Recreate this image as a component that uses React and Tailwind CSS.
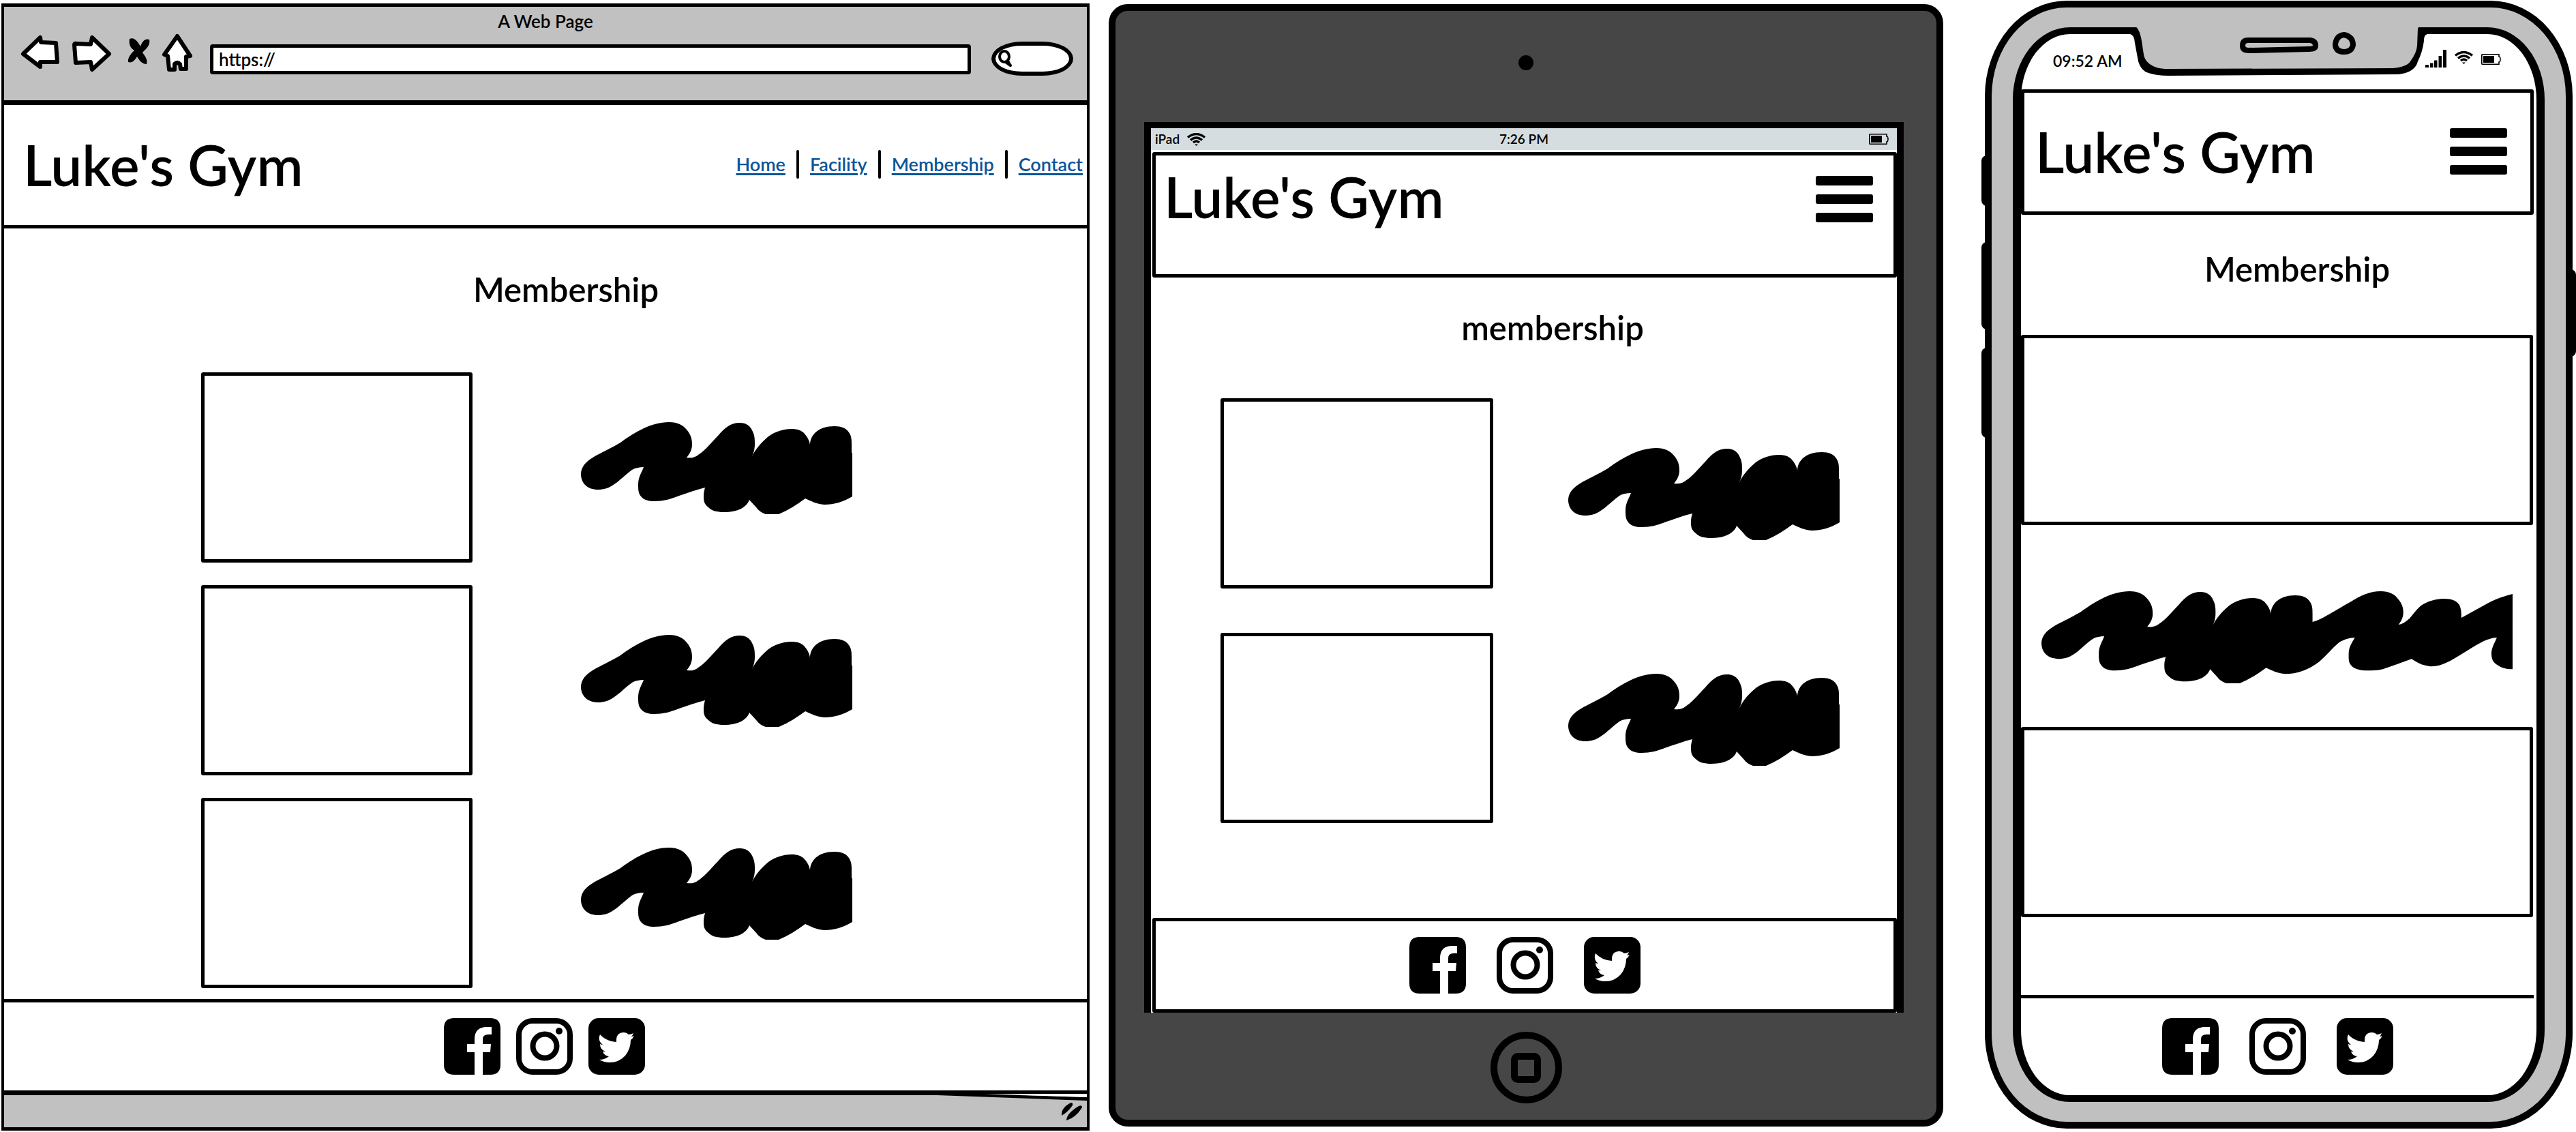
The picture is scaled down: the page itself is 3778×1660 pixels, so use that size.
import React from "react";

function Logo() {
  return <p className="text-[82px] leading-[96px] font-semibold whitespace-nowrap">Luke's Gym</p>;
}

function Title({ children, className }) {
  return <h1 className={`text-center text-[49px] leading-[64px] font-semibold ${className}`}>{children}</h1>;
}

function Placeholder() {
  return <div className="h-[279px] rounded-[3px] border-[5px] border-black bg-white" />;
}

const SCRIBBLE =
  "M0 76C1 54 28 48 58 30C80 14 104 0 129 0C142 0 149 4 155 11C161 18 163 24 163 33C163 40 160 46 155 52C162 53 167 52 172 48C183 41 192 29 201 20C211 8 220 1 233 1C242 1 247 5 250 10C255 19 255 24 255 32C255 38 254 44 251 50C256 40 264 30 275 21C285 14 296 10 309 10C317 10 323 12 327 16C332 21 335 27 336 33C336 26 339 20 344 15C351 9 360 6 372 6C382 6 389 9 393 15C397 21 397 26 397 33L397 45C410 42 430 28 452 16C468 6 481 0 497 0C509 0 517 4 522 11C528 18 530 24 530 31C530 38 527 44 523 49C530 48 534 44 539 40C545 33 549 27 556 21C567 14 578 11 590 11C601 11 608 14 612 20C615 26 615 33 615 39L653 18C666 11 678 7 690 4V114C680 114 674 112 668 108C661 104 659 99 659 90C660 81 664 75 667 68C661 68 655 70 648 73C632 81 618 91 602 100C591 106 582 110 570 110C558 109 550 104 542 99C526 105 512 110 500 114C492 116 485 116 477 116C467 116 460 114 455 110C449 105 450 98 450 91C450 82 455 75 459 68C451 68 443 71 436 75C426 83 418 94 407 103C391 115 375 121 357 121C345 120 338 116 329 112C317 121 304 129 290 135H271C264 132 261 130 258 126L247 114C243 125 230 132 210 132C199 132 192 130 187 125C180 120 180 114 180 108C180 103 181 100 182 96C169 99 157 104 144 108C132 113 120 116 108 116C99 116 93 114 89 110C84 105 84 99 84 91C84 81 89 74 92 66C86 66 80 67 75 70C65 77 58 85 49 91C41 97 33 99 25 99C10 99 0 90 0 76Z";

function Scribble({ wide }) {
  return (
    <svg viewBox={wide ? "0 0 690 135" : "0 0 398 135"} className="block w-full" aria-hidden="true">
      <path d={SCRIBBLE} />
    </svg>
  );
}

function Facebook() {
  return (
    <svg viewBox="0 0 83 83" className="size-[83px]" aria-hidden="true">
      <path
        fillRule="evenodd"
        d="M15 0H68Q83 0 83 15V68Q83 83 68 83H15Q0 83 0 68V15Q0 0 15 0ZM45 84V50H34V38H45V31Q45 13 63 13H70V24H65Q57 24 57 31V38H69L68 50H57V84Z"
      />
    </svg>
  );
}

function Instagram() {
  return (
    <svg viewBox="0 0 83 83" className="size-[83px]" aria-hidden="true">
      <rect x="4" y="4" width="75" height="75" rx="20" fill="none" stroke="#000" strokeWidth="8" />
      <circle cx="42" cy="41" r="17.5" fill="none" stroke="#000" strokeWidth="8" />
      <circle cx="63" cy="19" r="5" />
    </svg>
  );
}

function Twitter() {
  return (
    <svg viewBox="0 0 83 83" className="size-[83px]" aria-hidden="true">
      <rect width="83" height="83" rx="15" />
      <path
        fill="#fff"
        d="M17 24Q26 34 41 35Q40 21 52 21Q56 21 59 24Q63 24 66 22Q65 25 63 27Q65 27 67 26Q65 30 62 32Q62 45 54 55Q45 65 31 65Q23 65 16 61Q24 61 30 56Q23 55 21 49H25Q17 46 17 38Q19 39 21 39Q13 33 17 24Z"
      />
    </svg>
  );
}

function Socials({ className }) {
  return (
    <div className={`flex justify-center ${className}`}>
      <a href="#facebook" aria-label="Facebook"><Facebook /></a>
      <a href="#instagram" aria-label="Instagram"><Instagram /></a>
      <a href="#twitter" aria-label="Twitter"><Twitter /></a>
    </div>
  );
}

function MenuButton() {
  return (
    <button type="button" aria-label="Menu" className="flex w-[84px] flex-col gap-[13px]">
      <span className="h-[14px] w-full rounded-[3px] bg-black" />
      <span className="h-[14px] w-full rounded-[3px] bg-black" />
      <span className="h-[14px] w-full rounded-[3px] bg-black" />
    </button>
  );
}

function Wifi() {
  return (
    <svg viewBox="0 0 27 19" className="h-[19px] w-[27px]" fill="none" stroke="#000" strokeWidth="3.4" aria-hidden="true">
      <path d="M1 6.500Q13.500 -3.500 26 6.500" />
      <path d="M5 10.500Q13.500 3.500 22 10.500" />
      <path d="M9 14Q13.500 10 18 14" />
      <path d="M11 16.500H16L13.500 19Z" fill="#000" stroke="none" />
    </svg>
  );
}

function Battery() {
  return (
    <svg viewBox="0 0 29 16" className="h-4 w-[29px]" aria-hidden="true">
      <path d="M1.500 .8H26V4Q28 4 28 8Q28 12 26 12V15.200H1.500Q.8 15.200 .8 14V2Q.8 .8 1.500 .8Z" fill="none" stroke="#000" strokeWidth="1.600" />
      <rect x="3" y="3" width="16" height="10" />
    </svg>
  );
}

function Signal() {
  return (
    <svg viewBox="0 0 31 26" className="h-[26px] w-[31px]" aria-hidden="true">
      <path d="M0 22H5V26H0ZM7 19.500H11.500V26H7ZM13 15.500H17.500V26H13ZM19.500 9H24V26H19.500ZM26 0H31V26H26Z" />
    </svg>
  );
}

function ToolIcon({ box, className, label, d, solid }) {
  return (
    <button type="button" aria-label={label} className={className}>
      <svg viewBox={box} className="block h-[60px] w-full overflow-visible" aria-hidden="true">
        <path d={d} fill={solid ? "#000" : "#fff"} stroke={solid ? "none" : "#000"} strokeWidth="6" strokeLinejoin="round" />
      </svg>
    </button>
  );
}

const LINKS = ["Home", "Facility", "Membership", "Contact"];

function Browser() {
  return (
    <section className="mt-[5px] flex flex-col border-x-4 border-t-[5px] border-b-[5px] border-black bg-white">
      <div className="border-b-[7px] border-black bg-[#c1c1c1] pt-[5px] pb-9">
        <p className="text-center text-[26px] leading-8 font-semibold">A Web Page</p>
        <div className="mt-[3px] flex items-start gap-4 pr-5 pl-6">
          <ToolIcon label="Back" className="w-[58px]" box="30 50 58 60" d="M34 79L59 55L60 62L82 63L84 91L59 91V98Z" />
          <ToolIcon label="Forward" className="w-[62px]" box="104 50 62 60" d="M109 66Q109 63 112 64L133 65L135 55L160 79L135 102L133 91L111 92Z" />
          <ToolIcon solid label="Stop" className="w-10" box="182 50 40 60" d="M190 57C197 54 202 61 206 68C209 60 213 56 219 58C221 66 214 72 209 77C213 83 217 87 215 94C208 94 204 88 201 83C198 88 194 93 188 91C187 84 193 78 197 74C190 70 189 63 190 57Z" />
          <ToolIcon label="Home" className="w-[46px]" box="238 50 46 60" d="M260 53L279 82L273 83V101H265L264 94Q260 90 256 94V102H248L246 82L241 80Z" />
          <input
            aria-label="Address"
            defaultValue="https://"
            className="mt-[15px] ml-2 h-11 min-w-0 flex-1 rounded-[4px] border-[5px] border-black bg-white px-2 text-[26px] font-semibold outline-none"
          />
          <label className="mt-[11px] ml-[14px] flex h-[50px] w-[120px] items-center rounded-[50px/28px] border-[6px] border-black bg-white pl-1">
            <svg viewBox="0 0 20 26" className="h-[26px] w-5 shrink-0" fill="none" stroke="#000" strokeWidth="4" strokeLinecap="round" aria-hidden="true">
              <ellipse cx="9" cy="10" rx="7" ry="8" />
              <path d="M11 18L18 23M14 16L17 22" />
            </svg>
            <input type="search" aria-label="Search" className="min-w-0 flex-1 bg-transparent outline-none" />
          </label>
        </div>
      </div>
      <header className="flex h-[181px] items-center justify-between border-b-[5px] border-black pr-1.5 pb-0.5 pl-7">
        <Logo />
        <nav className="flex items-center gap-4 text-[27px] font-semibold text-[#0b5599]">
          {LINKS.map((name, i) => (
            <React.Fragment key={name}>
              {i > 0 && <span className="h-[42px] w-1 rounded-full bg-black" />}
              <a href={`#${name.toLowerCase()}`} className="underline decoration-[3px] underline-offset-[3px]">{name}</a>
            </React.Fragment>
          ))}
        </nav>
      </header>
      <main className="flex-1 pt-[57px] pb-4">
        <Title className="pl-[60px]">Membership</Title>
        <div className="mt-[90px] grid grid-cols-[289fr_398fr_159fr_398fr_344fr] items-center gap-y-[33px]">
          {[0, 1, 2].map((i) => (
            <React.Fragment key={i}>
              <div className="col-start-2"><Placeholder /></div>
              <div className="col-start-4 pt-0.5"><Scribble /></div>
            </React.Fragment>
          ))}
        </div>
      </main>
      <footer className="border-y-[5px] border-black py-[23px] pr-1">
        <Socials className="gap-[23px]" />
      </footer>
      <div className="relative flex h-[49px] items-center justify-end border-t-2 border-black bg-[#c1c1c1] pr-1.5">
        <svg viewBox="0 0 220 12" className="absolute -top-0.5 right-0 h-3 w-[220px]" aria-hidden="true">
          <path d="M0 0H60L220 5V10L0 2Z" />
          <path d="M70 0H220V5Z" fill="#fff" />
        </svg>
        <svg viewBox="0 0 32 28" className="h-7 w-8" aria-hidden="true">
          <path d="M1 20Q0 8 15 1Q18 1 17 5Q10 15 1 20ZM8 27Q8 17 26 6Q31 4 31 8Q22 23 8 27Z" />
        </svg>
      </div>
    </section>
  );
}

function Tablet() {
  return (
    <section className="my-1.5 flex flex-col items-center rounded-[28px] border-[10px] border-black bg-[#464646] pt-[65px] pb-6">
      <span className="size-[22px] rounded-full bg-black" />
      <div className="mt-[76px] flex w-full flex-1 pr-12 pl-[42px]">
        <div className="flex flex-1 flex-col border-x-[10px] border-t-[9px] border-black bg-white">
          <div className="grid h-8 grid-cols-3 items-center bg-[#d6dde0] px-1.5 text-[19px] leading-8 font-semibold">
            <span className="flex items-center gap-[11px]">iPad <Wifi /></span>
            <span className="text-center">7:26 PM</span>
            <span className="flex justify-end pr-1.5"><Battery /></span>
          </div>
          <header className="mt-[3px] ml-0.5 flex h-[184px] items-start justify-between rounded-[3px] border-[5px] border-black pr-[30px] pl-3">
            <div className="pt-3"><Logo /></div>
            <div className="pt-[30px]"><MenuButton /></div>
          </header>
          <main className="pt-[41px]">
            <Title className="pl-[84px]">membership</Title>
            <div className="mt-[72px] grid grid-cols-[102fr_400fr_110fr_398fr_84fr] items-center gap-y-[65px]">
              <div className="col-start-2"><Placeholder /></div>
              <div className="col-start-4 pt-0.5"><Scribble /></div>
              <div className="col-start-2"><Placeholder /></div>
              <div className="col-start-4 pb-6"><Scribble /></div>
            </div>
          </main>
          <footer className="mt-auto ml-0.5 rounded-[3px] border-[5px] border-black py-[23px]">
            <Socials className="gap-[45px]" />
          </footer>
        </div>
      </div>
      <button type="button" aria-label="Home button" className="mt-7 grid size-[105px] place-items-center rounded-full border-[10px] border-black">
        <span className="size-11 rounded-[10px] border-[10px] border-black" />
      </button>
    </section>
  );
}

function Notch() {
  return (
    <svg viewBox="0 0 448 76" className="absolute -top-3 left-1/2 h-[76px] w-[448px] -translate-x-1/2" aria-hidden="true">
      <path d="M6 12Q12 13 13 25L18 52Q22 66 33 69Q45 73 62 73L400 71Q424 68 428 52Q435 38 437 22Q437 12 443 12V2H4V12Z" />
      <path d="M13 0Q20 4 23 22L26 42Q28 55 45 61Q52 63 62 63L391 62Q412 60 417 52Q426 40 427 29L428 4L430 0Z" fill="#c0c0c0" />
      <path d="M179 21H270Q278 22 278 29Q278 34 268 34L180 36Q171 36 171 29Q171 21 179 21Z" fill="none" stroke="#000" strokeWidth="8" strokeLinejoin="round" />
      <path d="M320 13Q333 16 333 28Q331 38 320 38Q308 38 307 28Q308 14 320 13Z" fill="none" stroke="#000" strokeWidth="8" />
    </svg>
  );
}

function Phone() {
  return (
    <section className="mt-px mb-[3px] flex pr-[5px] pl-[33px]">
      <div className="relative flex flex-1 rounded-[120px/140px] border-[10px] border-black bg-[#c0c0c0] px-[31px] py-[29px]">
        <span className="absolute top-[217px] -left-[15px] h-[74px] w-2 rounded-l-lg bg-black" />
        <span className="absolute top-[344px] -left-[15px] h-[128px] w-2 rounded-l-lg bg-black" />
        <span className="absolute top-[499px] -left-[15px] h-[132px] w-2 rounded-l-lg bg-black" />
        <span className="absolute top-[384px] -right-[15px] h-[128px] w-2 rounded-r-lg bg-black" />
        <div className="relative flex flex-1 flex-col rounded-[84px/106px] border-x-[12px] border-y-[10px] border-black bg-white">
          <Notch />
          <div className="flex h-[81px] items-start justify-between pt-[23px] pr-[52px] pl-[47px]">
            <span className="text-[23px] leading-8 font-semibold">09:52 AM</span>
            <span className="flex items-start gap-3"><Signal /><span className="pt-0.5"><Wifi /></span><span className="pt-1.5"><Battery /></span></span>
          </div>
          <header className="mr-1 flex h-[184px] items-center justify-between rounded-[3px] border-[5px] border-black pr-[34px] pb-0.5 pl-4">
            <Logo />
            <MenuButton />
          </header>
          <main>
            <Title className="pt-[47px] pl-[54px]">Membership</Title>
            <div className="mt-[65px] mr-[5px]"><Placeholder /></div>
            <div className="mt-[97px] mr-[35px] ml-[30px]"><Scribble wide /></div>
            <div className="mt-16 mr-[5px]"><Placeholder /></div>
          </main>
          <footer className="mt-[114px] mr-1 border-t-[5px] border-black pt-[29px] pb-[30px]">
            <Socials className="gap-[45px]" />
          </footer>
        </div>
      </div>
    </section>
  );
}

export default function App() {
  return (
    <div className="grid grid-cols-[1596fr_1224fr_900fr] gap-7 bg-white pl-0.5 font-['Lato',sans-serif] text-black">
      <Browser />
      <Tablet />
      <Phone />
    </div>
  );
}
